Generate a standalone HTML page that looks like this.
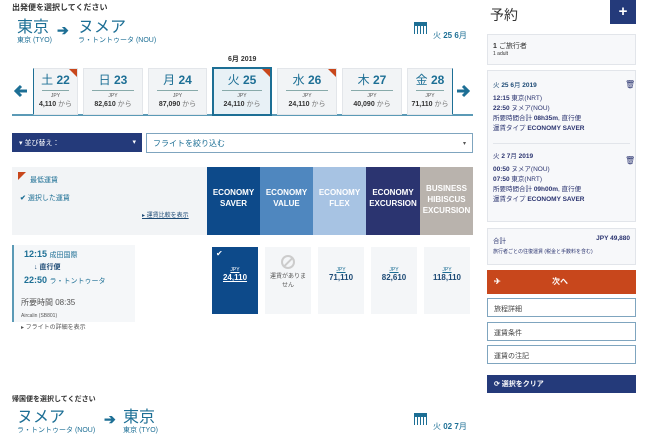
<!DOCTYPE html>
<html><head><meta charset="utf-8"><style>
*{margin:0;padding:0;box-sizing:border-box}
body{width:650px;height:443px;overflow:hidden;background:#fff;font-family:"Liberation Sans","Noto Sans CJK JP",sans-serif;color:#333;position:relative}
.a{position:absolute;white-space:nowrap}
.teal{color:#1d6f95}
.big{font-size:16px;line-height:16px}
.sm{font-size:7px}
.card{position:absolute;top:68px;height:47px;background:#f2f4f6;text-align:center;border:1px solid #e3e6ea}
.card .d{font-size:12px;color:#1d6f95;margin-top:4px;line-height:14px}
.card .d b{font-weight:bold}
.card .u{height:1px;background:#8aa;margin:3px 8px 2px}
.card .j{font-size:5px;color:#555}
.card .p{font-size:7px;color:#333;font-weight:bold}
.card .p span{font-weight:normal;color:#777}
.tri{position:absolute;right:0;top:0;width:0;height:0;border-left:8px solid transparent;border-top:8px solid #c8471c}
.col{position:absolute;top:167px;height:68px;color:#fff;font-weight:bold;font-size:8px;text-align:center;line-height:11px;padding-top:20px}
.cell{position:absolute;top:247px;width:46px;height:67px;background:#f4f6f8;text-align:center}
.cell .j{font-size:5px;color:#1d6f95;margin-top:20px;text-decoration:underline}
.cell .p{font-size:8px;font-weight:bold;color:#1d4a75}
.box{position:absolute;left:487px;width:149px;border:1px solid #e2e5ea;background:#f7f8fa}
.btn{position:absolute;left:487px;width:149px;height:19px;border:1px solid #7fa5bf;font-size:7px;color:#444;padding:5px 6px;background:#fff}
</style></head><body>
<div class="a" style="left:12px;top:2px;font-size:8px;font-weight:bold">出発便を選択してください</div>
<div class="a teal big" style="left:17px;top:20px">東京</div>
<div class="a teal sm" style="left:17px;top:35px">東京 (TYO)</div>
<div class="a teal" style="left:57px;top:22px;font-size:14px;font-weight:bold">➔</div>
<div class="a teal big" style="left:78px;top:20px">ヌメア</div>
<div class="a teal sm" style="left:78px;top:35px">ラ・トントゥータ (NOU)</div>
<div class="a" style="left:414px;top:22px;width:13px;height:12px;background:#1d6f95;border-top:3px solid #1d6f95"><div style="margin:1px;height:8px;background:repeating-linear-gradient(90deg,#fff 0 2px,#1d6f95 2px 3px)"></div></div>
<div class="a teal" style="left:433px;top:30px;font-size:8px">火 <b>25 6</b>月</div>
<div class="a" style="left:228px;top:54px;font-size:7px;font-weight:bold">6月 2019</div>
<svg class="a" style="left:14px;top:84px" width="14" height="14" viewBox="0 0 14 14"><path d="M13 7H3M7 2L2 7l5 5" stroke="#1d6f95" stroke-width="3" fill="none"/></svg>
<svg class="a" style="left:456px;top:84px" width="14" height="14" viewBox="0 0 14 14"><path d="M1 7h10M7 2l5 5-5 5" stroke="#1d6f95" stroke-width="3" fill="none"/></svg>
<div class="a" style="left:12px;top:114px;width:461px;height:2px;background:#5b9ab6"></div>
<div class="card" style="left:33px;width:45px;border-left:1px solid #1d6f95"><div class="tri"></div><div class="d">土 <b>22</b></div><div class="u"></div><div class="j">JPY</div><div class="p">4,110 <span>から</span></div></div>
<div class="card" style="left:83px;width:60px"><div class="d">日 <b>23</b></div><div class="u"></div><div class="j">JPY</div><div class="p">82,610 <span>から</span></div></div>
<div class="card" style="left:148px;width:59px"><div class="d">月 <b>24</b></div><div class="u"></div><div class="j">JPY</div><div class="p">87,090 <span>から</span></div></div>
<div class="card" style="left:212px;width:60px;background:#e8f1f6;border:2px solid #1d6f95;top:67px;height:49px"><div class="tri"></div><div class="d">火 <b>25</b></div><div class="u"></div><div class="j">JPY</div><div class="p">24,110 <span>から</span></div></div>
<div class="card" style="left:277px;width:60px"><div class="tri"></div><div class="d">水 <b>26</b></div><div class="u"></div><div class="j">JPY</div><div class="p">24,110 <span>から</span></div></div>
<div class="card" style="left:342px;width:60px"><div class="d">木 <b>27</b></div><div class="u"></div><div class="j">JPY</div><div class="p">40,090 <span>から</span></div></div>
<div class="card" style="left:407px;width:46px;border-right:1px solid #1d6f95"><div class="d">金 <b>28</b></div><div class="u"></div><div class="j">JPY</div><div class="p">71,110 <span>から</span></div></div>
<div class="a" style="left:12px;top:133px;width:130px;height:19px;background:#243a7a;color:#fff;font-size:7px;padding:5px 7px">▾ 並び替え：<span style="position:absolute;right:6px">▾</span></div>
<div class="a" style="left:146px;top:133px;width:327px;height:20px;border:1px solid #7fa5bf;font-size:8px;color:#1d6f95;padding:4px 6px">フライトを絞り込む<span style="position:absolute;right:6px;top:6px;font-size:6px;color:#555">▾</span></div>
<div class="a" style="left:12px;top:167px;width:195px;height:68px;background:#f2f4f6"></div>
<div class="a" style="left:18px;top:172px;width:0;height:0;border-left:8px solid transparent;border-top:8px solid #c8471c;transform:scaleX(-1)"></div>
<div class="a teal" style="left:30px;top:175px;font-size:7px">最低運賃</div>
<div class="a teal" style="left:20px;top:193px;font-size:7px"><b>✔</b> 選択した運賃</div>
<div class="a" style="left:142px;top:210px;font-size:6px;color:#1d4a75;text-decoration:underline">▸ 運賃比較を表示</div>
<div class="col" style="left:207px;width:53px;background:#0d4a8a">ECONOMY<br>SAVER</div>
<div class="col" style="left:260px;width:53px;background:#4f87bf">ECONOMY<br>VALUE</div>
<div class="col" style="left:313px;width:53px;background:#a7c3e3">ECONOMY<br>FLEX</div>
<div class="col" style="left:366px;width:54px;background:#2b3470">ECONOMY<br>EXCURSION</div>
<div class="col" style="left:420px;width:53px;background:#b9b3ad;padding-top:16px">BUSINESS<br>HIBISCUS<br>EXCURSION</div>
<div class="a" style="left:12px;top:245px;width:123px;height:77px;background:#f5f7f9;border-left:2px solid #5b9ab6"></div>
<div class="a teal" style="left:24px;top:249px;font-size:9px"><b>12:15</b> <span style="font-size:7px">成田国際</span></div>
<div class="a" style="left:34px;top:262px;font-size:7px;color:#1d4a75">↓ <b>直行便</b></div>
<div class="a teal" style="left:24px;top:275px;font-size:9px"><b>22:50</b> <span style="font-size:7px">ラ・トントゥータ</span></div>
<div class="a" style="left:21px;top:297px;font-size:8px;color:#555">所要時間 08:35</div>
<div class="a" style="left:21px;top:313px;font-size:5px;color:#555">Aircalin (SB801)</div>
<div class="a" style="left:21px;top:322px;font-size:6px;color:#555">▸ フライトの詳細を表示</div>
<div class="cell" style="left:212px;background:#0d4a8a"><div class="a" style="left:4px;top:2px;color:#fff;font-size:8px">✔</div><div class="j" style="color:#fff">JPY</div><div class="p" style="color:#fff;text-decoration:underline">24,110</div></div>
<div class="cell" style="left:265px"><div style="margin:8px auto 0;width:14px;height:14px;border:2px solid #ccc;border-radius:50%;position:relative"><div style="position:absolute;left:4px;top:-1px;width:2px;height:13px;background:#ccc;transform:rotate(45deg)"></div></div><div style="font-size:6px;color:#555;margin-top:4px;line-height:9px">運賃がありま<br>せん</div></div>
<div class="cell" style="left:318px"><div class="j">JPY</div><div class="p">71,110</div></div>
<div class="cell" style="left:371px"><div class="j">JPY</div><div class="p">82,610</div></div>
<div class="cell" style="left:424px"><div class="j">JPY</div><div class="p">118,110</div></div>
<div class="a" style="left:12px;top:394px;font-size:7px;font-weight:bold">帰国便を選択してください</div>
<div class="a teal big" style="left:17px;top:410px">ヌメア</div>
<div class="a teal sm" style="left:17px;top:425px">ラ・トントゥータ (NOU)</div>
<div class="a teal" style="left:104px;top:411px;font-size:14px;font-weight:bold">➔</div>
<div class="a teal big" style="left:123px;top:410px">東京</div>
<div class="a teal sm" style="left:123px;top:425px">東京 (TYO)</div>
<div class="a" style="left:414px;top:413px;width:13px;height:12px;background:#1d6f95;border-top:3px solid #1d6f95"><div style="margin:1px;height:8px;background:repeating-linear-gradient(90deg,#fff 0 2px,#1d6f95 2px 3px)"></div></div>
<div class="a teal" style="left:433px;top:421px;font-size:8px">火 <b>02 7</b>月</div>
<!-- sidebar -->
<div class="a" style="left:490px;top:5px;font-size:14px;color:#333">予約</div>
<div class="a" style="left:610px;top:0;width:26px;height:24px;background:#243a7a;color:#fff;font-size:15px;font-weight:bold;text-align:center;line-height:24px">+</div>
<div class="box" style="top:34px;height:31px;padding:6px 5px"><div style="font-size:7px"><b>1</b> ご旅行者</div><div style="font-size:5px">1 adult</div></div>
<div class="box" style="top:70px;height:152px;font-size:6.5px;color:#2b3470;line-height:10px;padding:10px 5px">
<div style="color:#1d4a75">火 <b>25 6</b>月 <b>2019</b></div><div style="margin-top:3px"><b>12:15</b> 東京(NRT)</div><div><b>22:50</b> ヌメア(NOU)</div><div>所要時間合計 <b>08h35m</b>, 直行便</div><div>運賃タイプ <b>ECONOMY SAVER</b></div>
<div style="border-top:1px solid #e2e5ea;margin-top:9px;padding-top:8px">火 <b>2 7</b>月 <b>2019</b></div><div style="margin-top:3px"><b>00:50</b> ヌメア(NOU)</div><div><b>07:50</b> 東京(NRT)</div><div>所要時間合計 <b>09h00m</b>, 直行便</div><div>運賃タイプ <b>ECONOMY SAVER</b></div>
<div class="a" style="left:137px;top:9px;font-size:8px">🗑</div><div class="a" style="left:137px;top:85px;font-size:8px">🗑</div></div>
<div class="box" style="top:228px;height:37px;padding:6px 5px;font-size:6.5px;color:#2b3470"><div>合計<b style="float:right">JPY 49,880</b></div><div style="font-size:5px;margin-top:3px">旅行者ごとの往復運賃 (税金と手数料を含む)</div></div>
<div class="a" style="left:487px;top:270px;width:149px;height:24px;background:#c8471c;color:#fff;font-size:8px;font-weight:bold;line-height:24px"><span style="margin-left:7px">✈</span><span style="position:absolute;left:65px">次へ</span></div>
<div class="btn" style="top:298px">旅程詳細</div>
<div class="btn" style="top:322px">運賃条件</div>
<div class="btn" style="top:345px">運賃の注記</div>
<div class="a" style="left:487px;top:375px;width:149px;height:18px;background:#243a7a;color:#fff;font-size:7px;font-weight:bold;padding:4px 7px">⟳ 選択をクリア</div>
</body></html>
